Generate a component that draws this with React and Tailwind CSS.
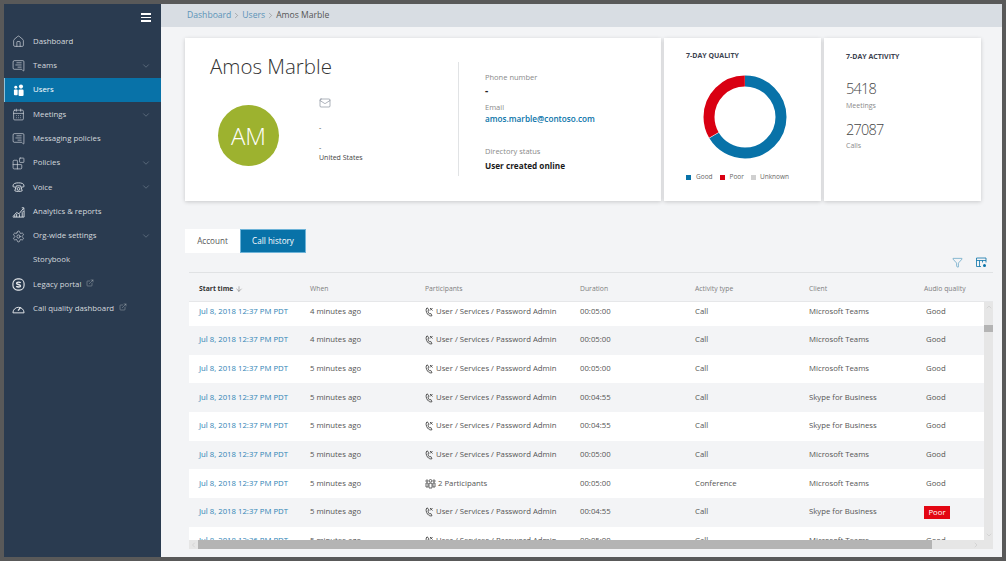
import { ChevronDown, ChevronLeft, ChevronRight, ChevronUp, ExternalLink, Filter, House, MessageSquareText, CalendarDays, Blocks, Settings, Mail, ArrowDown } from 'lucide-react';

const BLUE = '#0872a8';

const UsersGlyph = () => (
  <svg width="13" height="13" viewBox="0 0 14 14" fill="#fff">
    <circle cx="3" cy="3.4" r="1.6" />
    <circle cx="8.6" cy="2.8" r="2.2" />
    <rect x="1" y="6" width="4" height="6" rx="1" />
    <rect x="6" y="6" width="5.4" height="7" rx="1.2" />
  </svg>
);

const VoiceGlyph = () => (
  <svg width="13" height="13" viewBox="0 0 14 14" fill="none" stroke="#d8dde3" strokeWidth="1">
    <path d="M1 5.500C1 2.500 4 2 7 2s6 .5 6 3.500c0 .8-.6 1-1.300 1H10c-.6 0-.8-.5-.8-1.300H4.800C4.800 6 4.600 6.500 4 6.500H2.300C1.600 6.500 1 6.300 1 5.500Z" />
    <path d="M4.300 6.500 3 10.500c1 1 7 1 8 0L9.700 6.500" />
    <circle cx="7" cy="8.500" r="1.500" />
  </svg>
);

const ChartGlyph = () => (
  <svg width="13" height="13" viewBox="0 0 14 14" fill="none" stroke="#d8dde3" strokeWidth="1">
    <path d="M1 12.500 5 8l2.500 1.500L12.500 3.500" />
    <path d="M1 13h12V6l-2 2v5M8 13v-3M5 13V9.500M3 13v-2" />
    <path d="M10.500 3h2.300v2.300" />
  </svg>
);

const SkypeGlyph = () => (
  <svg width="13" height="13" viewBox="0 0 14 14" fill="none" stroke="#e6e9ec" strokeWidth="1.200">
    <rect x="1" y="1" width="12" height="12" rx="5" />
    <path d="M9.300 5.200C8.800 4.300 5 3.800 4.900 5.600c-.1 1.800 4.400 1.100 4.300 3-.1 1.700-3.900 1.300-4.500.2" strokeWidth="1.500" />
  </svg>
);

const DashGlyph = () => (
  <svg width="13" height="12" viewBox="0 0 15 14" fill="none" stroke="#e6e9ec" strokeWidth="1.100">
    <path d="M1 11.500a6.500 6.500 0 1 1 13 0Z" />
    <path d="m7 9 3-4" strokeWidth="1.500" />
  </svg>
);

const CallGlyph = () => (
  <svg width="9" height="10" viewBox="0 0 9 10" fill="none" stroke="#555" strokeWidth="1" className="shrink-0">
    <path d="M2 .800C.500 2 1 5 2.500 7c1.200 1.500 3 2.400 4.500 1.700L5.700 6.400l-1.200.5C3.500 5.800 3 4.600 3.100 3.400l1-.6Z" />
    <path d="M5 1 7.500 3.500M7.500 1 5 3.500" />
  </svg>
);

const ConfGlyph = () => (
  <svg width="11" height="10" viewBox="0 0 11 10" fill="none" stroke="#555" strokeWidth="0.900" className="shrink-0">
    <circle cx="2" cy="2" r="1.100" />
    <circle cx="5.500" cy="1.800" r="1.300" />
    <circle cx="9" cy="2" r="1.100" />
    <path d="M1 4h2v4H1zM4 4.200h3V9H4zM8 4h2v4H8z" />
  </svg>
);

const ColumnsGlyph = () => (
  <svg width="11" height="11" viewBox="0 0 11 11" fill="none" stroke={BLUE} strokeWidth="0.800">
    <path d="M5 9.500H.500v-8.500h9.500v4.500M.500 3.500h9.500M3.500 3.500v6M6.500 3.500v2" />
    <circle cx="8.500" cy="8.500" r="1.500" fill={BLUE} stroke="none" />
  </svg>
);

const nav = [
  { label: 'Dashboard', icon: <House size={13} strokeWidth={1.2} /> },
  { label: 'Teams', icon: <MessageSquareText size={13} strokeWidth={1.2} className="-scale-x-100" />, caret: true },
  { label: 'Users', icon: <UsersGlyph />, active: true },
  { label: 'Meetings', icon: <CalendarDays size={13} strokeWidth={1.2} />, caret: true },
  { label: 'Messaging policies', icon: <MessageSquareText size={13} strokeWidth={1.2} className="-scale-x-100" /> },
  { label: 'Policies', icon: <Blocks size={13} strokeWidth={1.2} />, caret: true },
  { label: 'Voice', icon: <VoiceGlyph />, caret: true },
  { label: 'Analytics & reports', icon: <ChartGlyph /> },
  { label: 'Org-wide settings', icon: <Settings size={13} strokeWidth={1.2} />, caret: true },
  { label: 'Storybook' },
  { label: 'Legacy portal', icon: <SkypeGlyph />, ext: true },
  { label: 'Call quality dashboard', icon: <DashGlyph />, ext: true },
];

const pw = 'User / Services / Password Admin';
const t37 = 'Jul 8, 2018 12:37 PM PDT';
const rows = [
  [t37, '4 minutes ago', pw, '00:05:00', 'Call', 'Microsoft Teams', 'Good'],
  [t37, '4 minutes ago', pw, '00:05:00', 'Call', 'Microsoft Teams', 'Good'],
  [t37, '5 minutes ago', pw, '00:05:00', 'Call', 'Microsoft Teams', 'Good'],
  [t37, '5 minutes ago', pw, '00:04:55', 'Call', 'Skype for Business', 'Good'],
  [t37, '5 minutes ago', pw, '00:04:55', 'Call', 'Skype for Business', 'Good'],
  [t37, '5 minutes ago', pw, '00:05:00', 'Call', 'Microsoft Teams', 'Good'],
  [t37, '5 minutes ago', '2 Participants', '00:05:00', 'Conference', 'Microsoft Teams', 'Good'],
  [t37, '5 minutes ago', pw, '00:04:55', 'Call', 'Skype for Business', 'Poor'],
  ['Jul 8, 2018 12:36 PM PDT', '5 minutes ago', pw, '00:05:00', 'Call', 'Microsoft Teams', 'Good'],
];

const cols = 'grid grid-cols-[111px_115px_155px_115px_114px_115px_1fr] pl-[10px] items-center';

function Sidebar() {
  return (
    <aside className="w-[157px] shrink-0 bg-[#2a3b50] text-[#d5dade] text-[7.800px] flex flex-col">
      <div className="h-[25.5px] flex items-center justify-end pr-[10px] pt-[1px]">
        <div className="w-[10px] flex flex-col gap-[2px]">
          <div className="h-[1.500px] bg-white" />
          <div className="h-[1.500px] bg-white" />
          <div className="h-[1.500px] bg-white" />
        </div>
      </div>
      {nav.map((n) => (
        <div
          key={n.label}
          className={`h-[24.3px] flex items-center shrink-0 ${n.active ? 'bg-[#0872a8] border-l border-[#8fc3dc] text-white' : ''}`}
        >
          <span className={`${n.active ? 'w-[28px] pl-[8px]' : 'w-[29px] pl-[8px]'} flex items-center text-[#d8dde3]`}>{n.icon}</span>
          <span>{n.label}</span>
          {n.ext && <ExternalLink size={8} strokeWidth={1} className="ml-[5px] -mt-[3px]" />}
          {n.caret && <ChevronDown size={10} strokeWidth={1} className="ml-auto mr-[10px] text-[#9aa6b2]" />}
        </div>
      ))}
    </aside>
  );
}

function Card({ className, children }) {
  return <section className={`bg-white shadow-[0_1px_4px_rgba(0,0,0,0.18)] h-[163px] ${className}`}>{children}</section>;
}

function Donut() {
  const r = 36;
  const c = 2 * Math.PI * r;
  const good = 0.663;
  return (
    <svg width="84" height="84" viewBox="0 0 84 84" className="-rotate-90 block">
      <circle cx="42" cy="42" r={r} fill="none" stroke="#0872a8" strokeWidth="11" strokeDasharray={`${c * good} ${c}`} />
      <circle cx="42" cy="42" r={r} fill="none" stroke="#d90012" strokeWidth="11" strokeDasharray={`${c * (1 - good) - 1} ${c}`} strokeDashoffset={-(c * good + 0.5)} />
    </svg>
  );
}

function Profile() {
  return (
    <Card className="w-[476px] flex">
      <div className="w-[273px] pl-[25px] pt-[14px]">
        <h1 className="text-[20.500px] leading-[29px] font-light text-[#333]">Amos Marble</h1>
        <div className="flex mt-[25px]">
          <div className="ml-[8px] w-[61px] h-[61px] mt-[-1px] rounded-full bg-[#9db22f] text-white text-[24px] font-light flex items-center justify-center">AM</div>
          <div className="ml-[40px] -mt-[9px] text-[7px] leading-[10px] text-[#444]">
            <Mail size={12} strokeWidth={1} className="text-[#5b6475]" />
            <div className="mt-[14px]">-</div>
            <div className="mt-[10px]">-</div>
            <div>United States</div>
          </div>
        </div>
      </div>
      <div className="w-px h-[114px] mt-[24px] bg-[#e1e3e5]" />
      <div className="pl-[26px] pt-[34px] text-[7.500px] text-[#8a8a8a] leading-[10px]">
        <div>Phone number</div>
        <div className="mt-[2px] text-[10px] leading-[13px] font-bold text-[#222]">-</div>
        <div className="mt-[5px]">Email</div>
        <div className="text-[8.200px] leading-[12px] mt-[1px] font-semibold text-[#0872a8]">amos.marble@contoso.com</div>
        <div className="mt-[21px]">Directory status</div>
        <div className="mt-[3px] text-[8.200px] leading-[13px] font-bold text-[#1a1a1a]">User created online</div>
      </div>
    </Card>
  );
}

function Quality() {
  return (
    <Card className="w-[157px] pl-[22px] pt-[13px]">
      <div className="text-[7px] leading-[10px] font-bold text-[#3c4350]">7-DAY QUALITY</div>
      <div className="ml-[17px] mt-[14px]"><Donut /></div>
      <div className="flex items-center mt-[13px] text-[6.500px] leading-[10px] text-[#666]">
        <span className="w-[5px] h-[5px] bg-[#0872a8] mr-[5px]" />Good
        <span className="w-[5px] h-[5px] bg-[#d90012] ml-[7px] mr-[5px]" />Poor
        <span className="w-[5px] h-[5px] bg-[#d0d0d0] ml-[7px] mr-[4px]" />Unknown
      </div>
    </Card>
  );
}

function Activity() {
  return (
    <Card className="w-[157px] pl-[22px] pt-[14px] text-[#444]">
      <div className="text-[7px] leading-[10px] font-bold text-[#3c4350]">7-DAY ACTIVITY</div>
      <div className="mt-[17px] text-[14.500px] leading-[20px] font-light tracking-[-0.8px]">5418</div>
      <div className="mt-[2px] text-[7px] leading-[10px] text-[#8a8a8a]">Meetings</div>
      <div className="mt-[9px] text-[14.500px] leading-[20px] font-light tracking-[-0.8px]">27087</div>
      <div className="mt-[1px] text-[7px] leading-[10px] text-[#8a8a8a]">Calls</div>
    </Card>
  );
}

function CallTable() {
  return (
    <div className="ml-[4px] mr-[9px] relative">
      <div className="h-[19px] border-b border-[#e0e2e4] box-content flex items-center justify-end gap-[13px] pr-[6px]">
        <Filter size={11} strokeWidth={1} className="text-[#0872a8]" />
        <ColumnsGlyph />
      </div>
      <div className={`${cols} h-[29px] pt-[4px] border-b border-[#e6e7e9] text-[6.800px] text-[#808080]`}>
        <div className="font-bold text-[#333] flex items-center gap-[2px]">Start time <ArrowDown size={8} strokeWidth={1} className="text-[#333]" /></div>
        <div>When</div>
        <div>Participants</div>
        <div>Duration</div>
        <div>Activity type</div>
        <div>Client</div>
        <div>Audio quality</div>
      </div>
      <div className="h-[238px] overflow-hidden mr-[9px] text-[7.750px] text-[#555]">
        <div className="-mt-[4.7px]">
          {rows.map((r, i) => (
            <div key={i} className={`${cols} h-[28.67px] ${i % 2 === 0 ? 'bg-white' : 'bg-[#f3f4f6]'}`}>
              <div className="text-[#2f84b5]">{r[0]}</div>
              <div>{r[1]}</div>
              <div className="flex items-center gap-[2px]">
                {r[2] === pw ? <CallGlyph /> : <ConfGlyph />}
                {r[2]}
              </div>
              <div>{r[3]}</div>
              <div>{r[4]}</div>
              <div>{r[5]}</div>
              <div className="pl-[2px]">
                {r[6] === 'Poor'
                  ? <span className="inline-block -ml-[2px] w-[26px] text-center bg-[#e30613] text-white leading-[13px]">Poor</span>
                  : r[6]}
              </div>
            </div>
          ))}
        </div>
      </div>
      {/* scrollbars */}
      <div className="absolute right-0 top-[49px] w-[9px] h-[238px] bg-[#e6e6e6] flex flex-col items-center justify-between text-[#b0b0b0]">
        <ChevronUp size={8} strokeWidth={1} className="mt-[1px]" />
        <div className="absolute top-[23px] left-0 w-full h-[7px] bg-[#b4b4b4]" />
        <ChevronDown size={8} strokeWidth={1} className="mb-[1px]" />
      </div>
      <div className="h-[9px] bg-[#e6e6e6] flex items-center text-[#b0b0b0]">
        <ChevronLeft size={8} strokeWidth={1} className="w-[9px] shrink-0" />
        <div className="w-[734px] h-full bg-[#b4b4b4]" />
        <ChevronRight size={8} strokeWidth={1} className="ml-auto mr-[13px]" />
      </div>
    </div>
  );
}

export default function App() {
  return (
    <div className="w-[1006px] h-[561px] bg-[#595959] p-[4px] overflow-hidden" style={{ fontFamily: '"Open Sans", "Noto Sans", sans-serif' }}>
      <div className="flex h-[553px] w-[998px] bg-[#f3f4f6] overflow-hidden">
        <Sidebar />
        <main className="flex-1 min-w-0">
          <div className="h-[23px] bg-[#d8dde3] pl-[26px] flex items-center text-[8.600px] text-[#555] gap-[1px]">
            <span className="text-[#5b93b8]">Dashboard</span>
            <ChevronRight size={9} strokeWidth={1} />
            <span className="text-[#5b93b8]">Users</span>
            <ChevronRight size={9} strokeWidth={1} />
            <span>Amos Marble</span>
          </div>
          <div className="pl-[24px] pt-[11px]">
            <div className="flex gap-[3px]">
              <Profile />
              <Quality />
              <Activity />
            </div>
            <div className="flex mt-[28px] h-[24px] text-[8.100px]">
              <div className="w-[55px] bg-white text-[#555] flex items-center justify-center">Account</div>
              <div className="w-[66px] bg-[#0872a8] text-white flex items-center justify-center border border-[#6db3d8]">Call history</div>
            </div>
            <CallTable />
          </div>
        </main>
      </div>
    </div>
  );
}
